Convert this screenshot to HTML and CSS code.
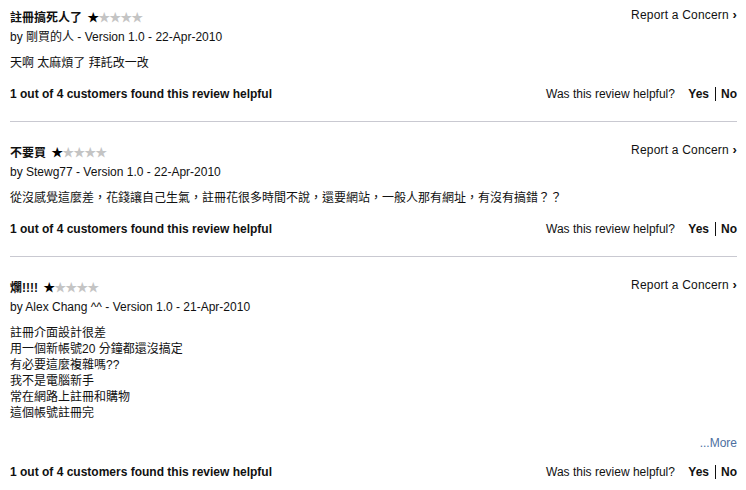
FILE: index.html
```html
<!DOCTYPE html>
<html lang="zh-Hant">
  <head>
    <meta charset="utf-8">
    <title>Customer Reviews</title>
    <link rel="stylesheet" href="styles.css">
  </head>
  <body>
    <div class="reviews">
      <div class="review">
        <div class="head">
          <div class="title">註冊搞死人了 <span class="stars"><span class="on">★</span>★★★★</span></div>
          <a class="report" href="#">Report a Concern <span class="chev">›</span></a>
        </div>
        <div class="byline">by 剛買的人 - Version 1.0 - 22-Apr-2010</div>
        <div class="text">
          <p>天啊 太麻煩了 拜託改一改</p>
        </div>
        <div class="foot">
          <div class="count">1 out of 4 customers found this review helpful</div>
          <div class="vote">Was this review helpful? <b class="yes">Yes</b><b class="no">No</b></div>
        </div>
      </div>
      <div class="review">
        <div class="head">
          <div class="title">不要買 <span class="stars"><span class="on">★</span>★★★★</span></div>
          <a class="report" href="#">Report a Concern <span class="chev">›</span></a>
        </div>
        <div class="byline">by Stewg77 - Version 1.0 - 22-Apr-2010</div>
        <div class="text">
          <p>從沒感覺這麼差，花錢讓自己生氣，註冊花很多時間不說，還要網站，一般人那有網址，有沒有搞錯？？</p>
        </div>
        <div class="foot">
          <div class="count">1 out of 4 customers found this review helpful</div>
          <div class="vote">Was this review helpful? <b class="yes">Yes</b><b class="no">No</b></div>
        </div>
      </div>
      <div class="review">
        <div class="head">
          <div class="title">爛!!!! <span class="stars"><span class="on">★</span>★★★★</span></div>
          <a class="report" href="#">Report a Concern <span class="chev">›</span></a>
        </div>
        <div class="byline">by Alex Chang ^^ - Version 1.0 - 21-Apr-2010</div>
        <div class="text">
          <p>註冊介面設計很差</p>
          <p>用一個新帳號20 分鐘都還沒搞定</p>
          <p>有必要這麼複雜嗎??</p>
          <p>我不是電腦新手</p>
          <p>常在網路上註冊和購物</p>
          <p>這個帳號註冊完</p>
        </div>
        <div class="more"><a href="#">...More</a></div>
        <div class="foot">
          <div class="count">1 out of 4 customers found this review helpful</div>
          <div class="vote">Was this review helpful? <b class="yes">Yes</b><b class="no">No</b></div>
        </div>
      </div>
    </div>
  </body>
</html>
```
FILE: styles.css
```css
body {
  margin: 0;
  font-family: "Liberation Sans", Arial, "Noto Sans CJK TC", sans-serif;
  font-size: 12px;
  line-height: 16px;
  color: #111;
  background: #fff;
}

.reviews {
  padding: 10px 9px 0 10px;
}

.review {
  padding-bottom: 19px;
  border-bottom: 1px solid #c9c9d1;
  margin-bottom: 23px;
}

.review:last-child {
  border-bottom: none;
  padding-bottom: 0;
  margin-bottom: 0;
}

.head,
.byline,
.foot,
.more,
.text p {
  height: 16px;
}

.head {
  display: flex;
  justify-content: space-between;
  align-items: center;
}

.title {
  font-weight: bold;
}

.stars {
  font-weight: normal;
  font-size: 12px;
  color: #c4c4c4;
  letter-spacing: -1px;
  margin-left: 2px;
}

.stars .on {
  color: #000;
}

.report {
  color: #111;
  text-decoration: none;
  letter-spacing: 0.2px;
  margin-top: -7px;
}

.chev {
  font-weight: bold;
  font-size: 13px;
}

.byline {
  margin-top: 3px;
}

.text {
  margin-top: 10px;
}

.text p {
  margin: 0;
}

.more {
  text-align: right;
  margin-top: 14px;
}

.more a {
  color: #4d6f9f;
  text-decoration: none;
}

.foot {
  display: flex;
  justify-content: space-between;
  align-items: center;
  margin-top: 15px;
}

.more + .foot {
  margin-top: 13px;
}

.count {
  font-weight: bold;
}

.vote b {
  font-weight: bold;
}

.yes {
  margin-left: 10px;
  padding-right: 6px;
  border-right: 1px solid #111;
}

.no {
  padding-left: 5px;
}
```
